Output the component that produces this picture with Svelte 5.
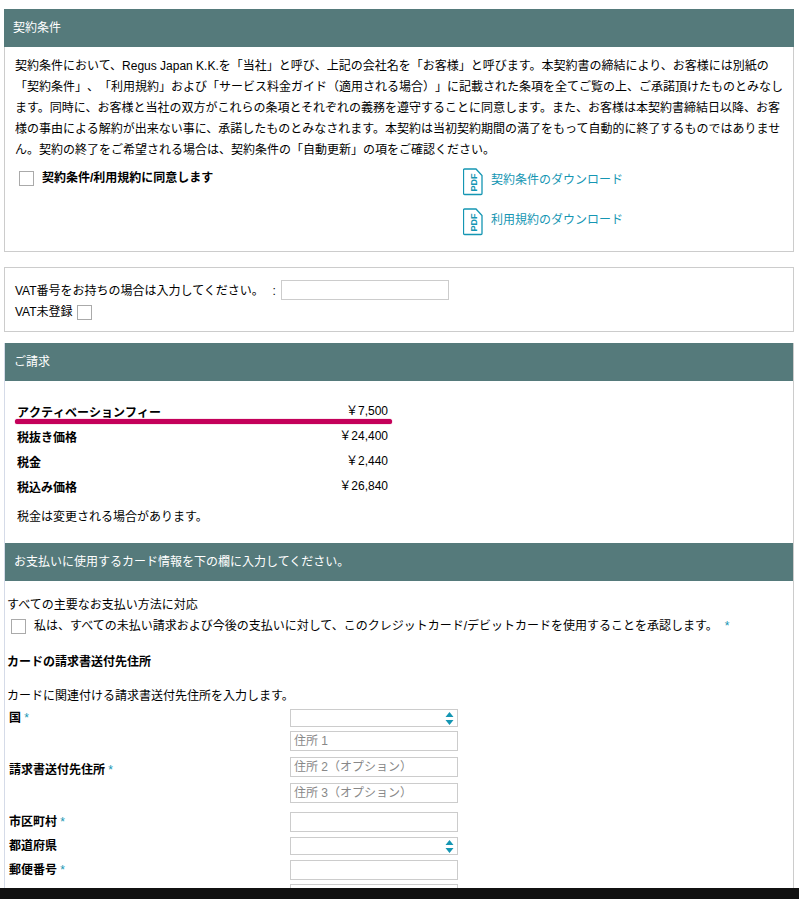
<script>
  const fields = [
    { label: "市区町村", required: true, kind: "input" },
    { label: "都道府県", required: false, kind: "select" },
    { label: "郵便番号", required: true, kind: "input" },
    { label: "電話番号", required: true, kind: "input" }
  ];
  const prices = [
    { label: "アクティベーションフィー", value: "￥7,500" },
    { label: "税抜き価格", value: "￥24,400" },
    { label: "税金", value: "￥2,440" },
    { label: "税込み価格", value: "￥26,840" }
  ];
</script>

{#snippet pdf()}
  <svg class="pdf" width="20" height="28" viewBox="0 0 20 28" aria-hidden="true">
    <path d="M1.5 1h11.5l6 6.5v18a1 1 0 0 1-1 1h-16.500a1 1 0 0 1-1-1v-23.500a1 1 0 0 1 1-1z" fill="none" stroke="#1596b3" stroke-width="1.300"/>
    <text x="-23.500" y="14" transform="rotate(-90)" textLength="18" lengthAdjust="spacingAndGlyphs" class="pdf-text">PDF</text>
  </svg>
{/snippet}

{#snippet arrows()}
  <svg class="arrows" width="9" height="13" viewBox="0 0 9 13" aria-hidden="true">
    <path d="M4.500 0l4 5h-8zM.5 8h8l-4 5z" fill="#1596b3"/>
  </svg>
{/snippet}

<div class="page">
  <section class="card terms">
    <h2>契約条件</h2>
    <div class="terms-body">
      <p class="legal">
        契約条件において、Regus Japan K.K.を「当社」と呼び、上記の会社名を「お客様」と呼びます。本契約書の締結により、お客様には別紙の<br />
        「契約条件」、「利用規約」および「サービス料金ガイド（適用される場合）」に記載された条項を全てご覧の上、ご承諾頂けたものとみなし<br />
        ます。同時に、お客様と当社の双方がこれらの条項とそれぞれの義務を遵守することに同意します。また、お客様は本契約書締結日以降、お客<br />
        様の事由による解約が出来ない事に、承諾したものとみなされます。本契約は当初契約期間の満了をもって自動的に終了するものではありませ<br />
        ん。契約の終了をご希望される場合は、契約条件の「自動更新」の項をご確認ください。
      </p>
      <div class="agree-row">
        <label class="agree"><span class="check"></span><b>契約条件/利用規約に同意します</b></label>
        <div class="downloads">
          <a href="#terms">{@render pdf()}契約条件のダウンロード</a>
          <a href="#rules">{@render pdf()}利用規約のダウンロード</a>
        </div>
      </div>
    </div>
  </section>

  <section class="card vat">
    <div class="vat-line"><span class="vat-label">VAT番号をお持ちの場合は入力してください。</span><span class="colon">:</span><span class="field vat-input"></span></div>
    <div class="vat-line second">VAT未登録<span class="check"></span></div>
  </section>

  <section class="card billing">
    <h2>ご請求</h2>
    <div class="prices">
      {#each prices as row}
        <div class="price"><b>{row.label}</b><span>{row.value}</span></div>
      {/each}
      <p class="note">税金は変更される場合があります。</p>
      <span class="mark"></span>
    </div>

    <h2>お支払いに使用するカード情報を下の欄に入力してください。</h2>
    <div class="payment">
      <p class="methods">すべての主要なお支払い方法に対応</p>
      <div class="consent">
        <span class="check"></span>
        <span>私は、すべての未払い請求および今後の支払いに対して、このクレジットカード/デビットカードを使用することを承認します。</span>
        <i class="req">*</i>
      </div>
      <h3>カードの請求書送付先住所</h3>
      <p class="hint">カードに関連付ける請求書送付先住所を入力します。</p>

      <div class="form">
        <b class="label">国 <i class="req">*</i></b>
        <span class="field select">{@render arrows()}</span>

        <b class="label">請求書送付先住所 <i class="req">*</i></b>
        <div class="stack">
          <span class="field">住所 1</span>
          <span class="field">住所 2（オプション）</span>
          <span class="field">住所 3（オプション）</span>
        </div>

        {#each fields as f}
          <b class="label">{f.label}{#if f.required}&nbsp;<i class="req">*</i>{/if}</b>
          <span class="field" class:select={f.kind === "select"}>
            {#if f.kind === "select"}{@render arrows()}{/if}
          </span>
        {/each}
      </div>
    </div>
  </section>

  <div class="bottom-bar"></div>
</div>

<style>
  :global(body) {
    margin: 0;
    background: #fff;
  }

  .page {
    position: relative;
    height: 899px;
    overflow: hidden;
    box-sizing: border-box;
    padding: 9px 5px 0 4px;
    font-family: "Liberation Sans", "Noto Sans CJK JP", sans-serif;
    font-size: 12px;
    line-height: 21px;
    color: #000;
    text-spacing-trim: space-all;
  }

  .card {
    border: 1px solid #ccc;
    background: #fff;
  }

  h2 {
    margin: 0;
    height: 38px;
    padding-left: 9px;
    background: #557a7b;
    color: #fff;
    font-size: 12px;
    font-weight: 400;
    line-height: 38px;
  }

  .terms {
    height: 243px;
    box-sizing: border-box;
    margin: 0 0 15px;
  }

  .terms h2 {
    margin: 0 -1px;
    position: relative;
    top: -1px;
  }

  .terms-body {
    margin-top: -1px;
    padding: 9px 10px 0;
  }

  .legal {
    margin: 0;
    white-space: nowrap;
  }

  .agree-row {
    display: flex;
    margin-top: 10px;
  }

  .agree {
    display: flex;
    align-items: center;
    gap: 8px;
    width: 448px;
    height: 15px;
    padding-left: 4px;
    box-sizing: border-box;
    line-height: 19px;
  }

  .downloads {
    display: flex;
    flex-direction: column;
    gap: 12px;
    margin-top: -3px;
  }

  .downloads a {
    display: flex;
    align-items: flex-start;
    gap: 8px;
    height: 28px;
    color: #1596b3;
    text-decoration: none;
    line-height: 24px;
  }

  .pdf {
    flex: none;
  }

  .pdf-text {
    font-size: 9px;
    font-weight: 700;
    fill: #1596b3;
    font-family: "Liberation Sans", sans-serif;
  }

  .check {
    display: inline-block;
    flex: none;
    width: 15px;
    height: 15px;
    box-sizing: border-box;
    border: 1px solid #aaa;
    background: #fff;
  }

  .vat {
    height: 65px;
    box-sizing: border-box;
    padding: 12px 10px 0;
    margin-bottom: 11px;
  }

  .vat-line {
    display: flex;
    align-items: flex-start;
    height: 20px;
    line-height: 22px;
  }

  .vat-line.second {
    align-items: center;
    height: 24px;
    gap: 4px;
    line-height: 21px;
  }

  .colon {
    width: 17px;
    text-align: right;
    padding-right: 5px;
    box-sizing: border-box;
  }

  .field {
    display: block;
    box-sizing: border-box;
    height: 20px;
    width: 168px;
    border: 1px solid #ccc;
    background: #fff;
    color: #888;
    line-height: 19px;
    padding-left: 3px;
    position: relative;
  }

  .vat-input {
    flex: none;
  }

  .select {
    height: 18px;
  }

  .arrows {
    position: absolute;
    right: 3px;
    top: 2px;
  }

  .billing {
    border-bottom: 0;
    height: 600px;
    border-top: 0;
    border-left-color: #d5dbe8;
  }

  .prices {
    position: relative;
    padding: 22px 0 0 12px;
    height: 140px;
  }

  .price {
    display: flex;
    justify-content: space-between;
    width: 371px;
    height: 25px;
  }

  .price b {
    font-kerning: none;
  }

  .price span {
    position: relative;
    top: -2px;
  }

  .note {
    margin: 4px 0 0;
  }

  .mark {
    position: absolute;
    left: 10px;
    top: 38px;
    width: 377px;
    height: 5px;
    border-radius: 3px;
    background: #c4005a;
    box-shadow: 0 0 1px #c4005a;
  }

  .payment {
    padding: 14px 0 0 2px;
  }

  .methods,
  .hint {
    margin: 0;
  }

  .consent {
    display: flex;
    align-items: center;
    gap: 8px;
    height: 21px;
    margin: -2px 0 0 4px;
    padding-top: 2px;
  }

  .consent .req {
    margin-left: -1px;
  }

  h3 {
    margin: 15px 0 13px;
    font-size: 12px;
    line-height: 21px;
    font-weight: 700;
  }

  .form {
    display: grid;
    grid-template-columns: 283px 168px;
    margin-top: 2px;
    row-gap: 5px;
  }

  .form > .field:last-child {
    margin-top: -1px;
  }

  .label {
    padding-left: 2px;
    line-height: 18px;
    align-self: center;
  }

  .stack {
    display: flex;
    flex-direction: column;
    gap: 6px;
    margin-top: -1px;
    margin-bottom: 4px;
  }

  .req {
    color: #1596b3;
    font-style: normal;
    font-weight: 400;
  }

  .bottom-bar {
    position: absolute;
    left: 0;
    right: 0;
    bottom: 0;
    height: 11px;
    background: #111;
  }
</style>
